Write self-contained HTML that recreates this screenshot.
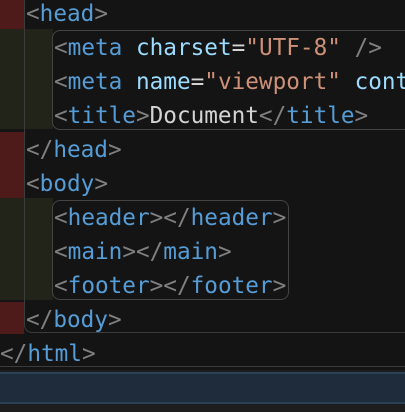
<!DOCTYPE html>
<html><head><style>
html,body{margin:0;width:405px;height:412px;overflow:hidden}
body{background:#141414;position:relative;font-family:"DejaVu Sans Mono","Liberation Mono",monospace;font-size:22.7px}
.w{position:absolute;left:0;top:0;width:405px;height:412px;overflow:hidden}
.a{position:absolute}
.l{position:absolute;height:34px;line-height:34px;white-space:pre;color:#d4d4d4}
.b{color:#808080}.t{color:#569cd6}.at{color:#9cdcfe}.s{color:#ce9178}
</style></head><body><div class="w">
<div class="a" style="left:0;top:0;width:24px;height:29px;background:#4e1a1a"></div>
<div class="a" style="left:0;top:29px;width:53px;height:100px;background:#222319"></div>
<div class="a" style="left:0;top:132px;width:24px;height:66px;background:#4e1a1a"></div>
<div class="a" style="left:0;top:198px;width:53px;height:102px;background:#222319"></div>
<div class="a" style="left:0;top:302px;width:24px;height:32px;background:#4e1a1a"></div>
<div class="a" style="left:24px;top:29px;width:1px;height:100px;background:#3a3a30"></div>
<div class="a" style="left:24px;top:198px;width:1px;height:102px;background:#3a3a30"></div>
<div class="a" style="left:52px;top:30px;width:380px;height:98px;border:1px solid #444;border-radius:8px"></div>
<div class="a" style="left:52px;top:200px;width:235px;height:98px;border:1px solid #444;border-radius:8px"></div>
<div class="a" style="left:24px;top:-10px;width:400px;height:342px;border:1px solid #3c3c3c;border-radius:8px;border-top:none"></div>
<div class="a" style="left:-10px;top:-10px;width:430px;height:376px;border:1px solid #3c3c3c;border-radius:8px;border-top:none"></div>
<div class="l" style="left:26px;top:-3px"><span class="b">&lt;</span><span class="t">head</span><span class="b">&gt;</span></div>
<div class="l" style="left:54px;top:31px"><span class="b">&lt;</span><span class="t">meta</span> <span class="at">charset</span>=<span class="s">"UTF-8"</span> <span class="b">/&gt;</span></div>
<div class="l" style="left:54px;top:65px"><span class="b">&lt;</span><span class="t">meta</span> <span class="at">name</span>=<span class="s">"viewport"</span> <span class="at">content</span></div>
<div class="l" style="left:54px;top:99px"><span class="b">&lt;</span><span class="t">title</span><span class="b">&gt;</span>Document<span class="b">&lt;/</span><span class="t">title</span><span class="b">&gt;</span></div>
<div class="l" style="left:26px;top:133px"><span class="b">&lt;/</span><span class="t">head</span><span class="b">&gt;</span></div>
<div class="l" style="left:26px;top:167px"><span class="b">&lt;</span><span class="t">body</span><span class="b">&gt;</span></div>
<div class="l" style="left:54px;top:201px"><span class="b">&lt;</span><span class="t">header</span><span class="b">&gt;&lt;/</span><span class="t">header</span><span class="b">&gt;</span></div>
<div class="l" style="left:54px;top:235px"><span class="b">&lt;</span><span class="t">main</span><span class="b">&gt;&lt;/</span><span class="t">main</span><span class="b">&gt;</span></div>
<div class="l" style="left:54px;top:269px"><span class="b">&lt;</span><span class="t">footer</span><span class="b">&gt;&lt;/</span><span class="t">footer</span><span class="b">&gt;</span></div>
<div class="l" style="left:26px;top:303px"><span class="b">&lt;/</span><span class="t">body</span><span class="b">&gt;</span></div>
<div class="l" style="left:0px;top:337px"><span class="b">&lt;/</span><span class="t">html</span><span class="b">&gt;</span></div>
<div class="a" style="left:0;top:370px;width:405px;height:42px;background:#1e1e1e"></div>
<div class="a" style="left:0;top:372px;width:405px;height:32px;background:#1f2c3b;border-top:2px solid #2a4254;border-bottom:2px solid #2a4254;box-sizing:border-box"></div>
</div></body></html>
